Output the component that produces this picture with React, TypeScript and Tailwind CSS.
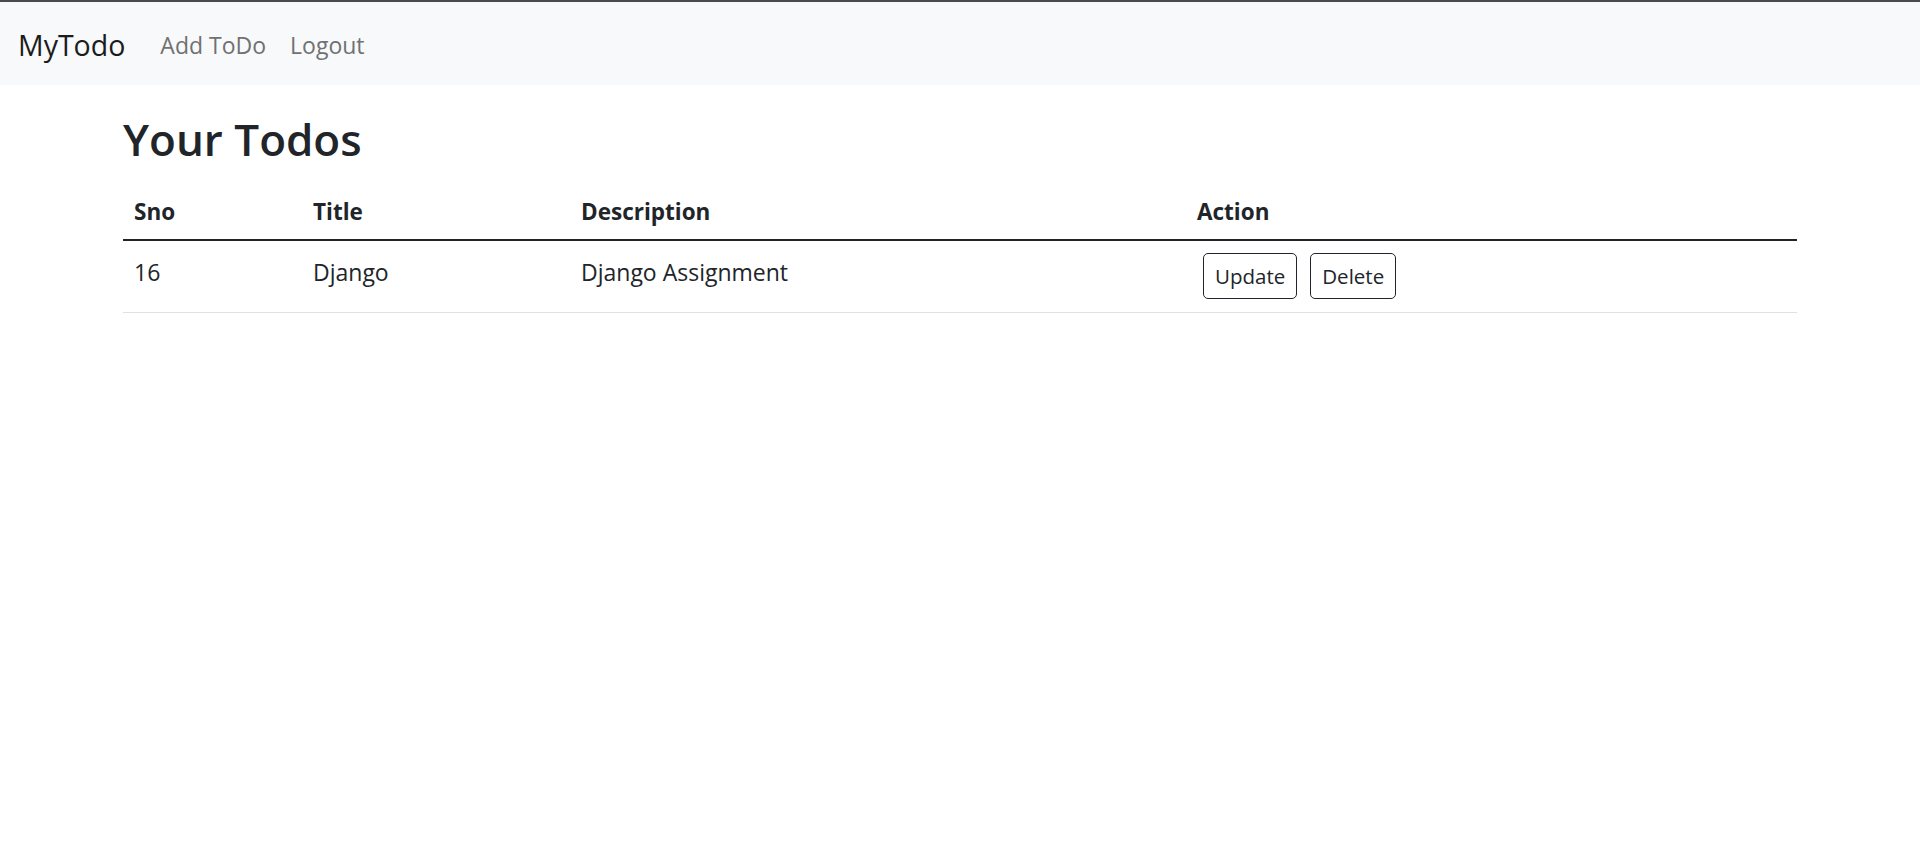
const todos = [
  { sno: 16, title: "Django", desc: "Django Assignment" },
];

const font = { fontFamily: '"Open Sans", "Noto Sans", sans-serif' };

export default function App() {
  return (
    <div className="min-h-screen bg-white text-[#212529]" style={font}>
      <div className="h-[2px] bg-[#4b4b4b]" />
      <nav className="flex h-[83px] items-center bg-[#f8f9fa] pt-[3px] pl-[18px]">
        <a href="#" className="text-[28.5px] text-[#1c1c1c]">
          MyTodo
        </a>
        <ul className="ml-[23px] flex">
          <li>
            <a href="#" className="px-[12px] text-[23px] text-[#707172]">
              Add ToDo
            </a>
          </li>
          <li>
            <a href="#" className="px-[12px] text-[23px] text-[#707172]">
              Logout
            </a>
          </li>
        </ul>
      </nav>

      <div className="mx-[123px]">
        <h1 className="mt-[27px] text-[44px] font-semibold leading-[54px]">Your Todos</h1>

        <table className="mt-[18px] w-full table-fixed border-collapse text-left text-[22.5px] leading-[33px]">
          <colgroup>
            <col className="w-[179px]" />
            <col className="w-[268px]" />
            <col className="w-[616px]" />
            <col />
          </colgroup>
          <thead>
            <tr className="border-b-2 border-[#212529]">
              <th className="px-[11px] pt-[11px] pb-[11px] font-bold">Sno</th>
              <th className="px-[11px] pt-[11px] pb-[11px] font-bold">Title</th>
              <th className="px-[11px] pt-[11px] pb-[11px] font-bold">Description</th>
              <th className="px-[11px] pt-[11px] pb-[11px] font-bold">Action</th>
            </tr>
          </thead>
          <tbody className="text-[23px]">
            {todos.map((todo) => (
              <tr key={todo.sno} className="border-b border-[#dee2e6]">
                <td className="px-[11px] pt-[15px] align-top">{todo.sno}</td>
                <td className="px-[11px] pt-[15px] align-top">{todo.title}</td>
                <td className="px-[11px] pt-[15px] align-top">{todo.desc}</td>
                <td className="pl-[17px] pt-[12px] pb-[13px] align-top">
                  <div className="flex gap-[13px]">
                    <button className="h-[46px] rounded-[5px] border border-[#212529] px-[11px] text-[20.5px] leading-none">
                      Update
                    </button>
                    <button className="h-[46px] rounded-[5px] border border-[#212529] px-[11px] text-[20.5px] leading-none">
                      Delete
                    </button>
                  </div>
                </td>
              </tr>
            ))}
          </tbody>
        </table>
      </div>
    </div>
  );
}
